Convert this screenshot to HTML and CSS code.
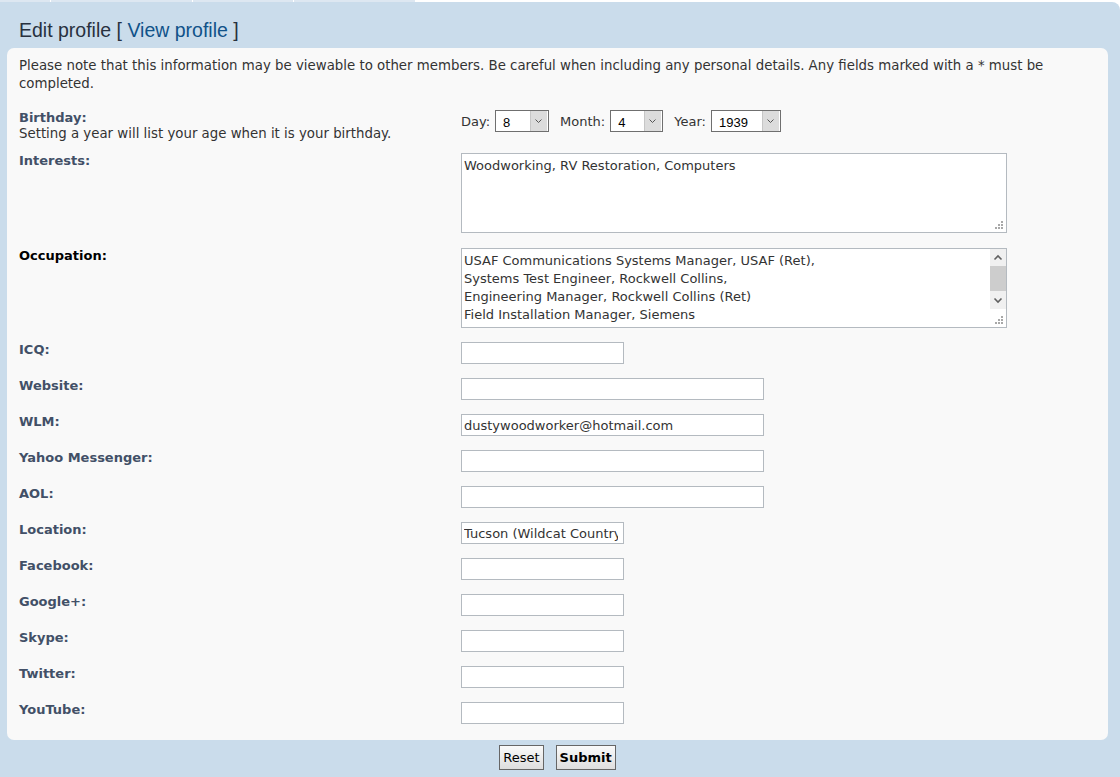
FILE: index.html
```html
<!DOCTYPE html>
<html lang="en">
<head>
    <meta charset="UTF-8">
    <meta name="viewport" content="width=device-width, initial-scale=1.0">
    <title>Edit profile</title>
    <link rel="stylesheet" href="styles.css">
</head>
<body>
    <div class="tabs"><span class="t1"></span><span class="t2"></span><span class="t3"></span><span class="t4"></span></div>
    <form class="wrap" action="#" onsubmit="return false;">
        <h2>Edit profile <span class="br">[</span> <a href="#">View profile</a> <span class="br">]</span></h2>
        <div class="panel">
            <p class="note">Please note that this information may be viewable to other members. Be careful when including any personal details. Any fields marked with a * must be completed.</p>

            <dl class="row row-bday">
                <dt><label>Birthday:</label><span class="explain">Setting a year will list your age when it is your birthday.</span></dt>
                <dd class="bday">
                    <label for="bday_day">Day:</label>
                    <select id="bday_day" class="sel-day"><option>8</option></select>
                    <label for="bday_month">Month:</label>
                    <select id="bday_month" class="sel-month"><option>4</option></select>
                    <label for="bday_year">Year:</label>
                    <select id="bday_year" class="sel-year"><option>1939</option></select>
                </dd>
            </dl>
            <dl class="row row-text">
                <dt><label for="interests">Interests:</label></dt>
                <dd><textarea id="interests">Woodworking, RV Restoration, Computers</textarea></dd>
            </dl>
            <dl class="row">
                <dt><label for="occupation" class="strong">Occupation:</label></dt>
                <dd>
                    <div class="scrollbox">
                        <textarea id="occupation">USAF Communications Systems Manager, USAF (Ret),
Systems Test Engineer, Rockwell Collins,
Engineering Manager, Rockwell Collins (Ret)
Field Installation Manager, Siemens</textarea>
                        <div class="vscroll">
                            <span class="sb-btn sb-up"></span>
                            <span class="sb-track"><span class="sb-thumb"></span></span>
                            <span class="sb-btn sb-down"></span>
                            <span class="sb-corner"></span>
                        </div>
                    </div>
                </dd>
            </dl>
            <dl class="row">
                <dt><label for="icq">ICQ:</label></dt>
                <dd><input type="text" id="icq" class="short"></dd>
            </dl>
            <dl class="row">
                <dt><label for="website">Website:</label></dt>
                <dd><input type="text" id="website" class="wide"></dd>
            </dl>
            <dl class="row">
                <dt><label for="wlm">WLM:</label></dt>
                <dd><input type="text" id="wlm" class="wide" value="dustywoodworker@hotmail.com"></dd>
            </dl>
            <dl class="row">
                <dt><label for="yim">Yahoo Messenger:</label></dt>
                <dd><input type="text" id="yim" class="wide"></dd>
            </dl>
            <dl class="row">
                <dt><label for="aol">AOL:</label></dt>
                <dd><input type="text" id="aol" class="wide"></dd>
            </dl>
            <dl class="row">
                <dt><label for="location">Location:</label></dt>
                <dd><input type="text" id="location" class="short" value="Tucson (Wildcat Country)"></dd>
            </dl>
            <dl class="row">
                <dt><label for="facebook">Facebook:</label></dt>
                <dd><input type="text" id="facebook" class="short"></dd>
            </dl>
            <dl class="row">
                <dt><label for="googleplus">Google+:</label></dt>
                <dd><input type="text" id="googleplus" class="short"></dd>
            </dl>
            <dl class="row">
                <dt><label for="skype">Skype:</label></dt>
                <dd><input type="text" id="skype" class="short"></dd>
            </dl>
            <dl class="row">
                <dt><label for="twitter">Twitter:</label></dt>
                <dd><input type="text" id="twitter" class="short"></dd>
            </dl>
            <dl class="row last">
                <dt><label for="youtube">YouTube:</label></dt>
                <dd><input type="text" id="youtube" class="short"></dd>
            </dl>
        </div>
        <div class="submit-buttons">
            <input type="reset" value="Reset" class="button2">
            <input type="submit" value="Submit" class="button1">
        </div>
    </form>
</body>
</html>
```

FILE: styles.css
```css
body {
    margin: 0;
    background: #fff;
    font-family: "DejaVu Sans", Verdana, sans-serif;
    color: #333;
}
.tabs {
    display: flex;
    height: 2px;
}
.tabs span {
    background: #dde7f1;
    margin-right: 1px;
}
.t1 { width: 50px; }
.t2 { width: 141px; }
.t3 { width: 100px; }
.t4 { width: 121px; }
.wrap {
    display: block;
    background: #cadceb;
    border-radius: 0 8px 0 0;
    padding: 0 12px 0 7px;
    height: 775px;
    box-sizing: border-box;
}
h2 {
    margin: 0 0 6px;
    padding: 16px 0 0 12px;
    font-family: "Liberation Sans", Arial, sans-serif;
    font-weight: normal;
    font-size: 19.5px;
    line-height: 24px;
    color: #28313f;
}
h2 a {
    color: #105289;
    text-decoration: none;
}
.panel {
    background: #f9f9f9;
    border-radius: 7px;
    padding: 9px 12px 16px;
}
.note {
    margin: 0 0 17px;
    font-size: 13.33px;
    line-height: 18px;
    color: #333;
}
.row {
    display: flex;
    margin: 0 0 14px;
}
.row.last {
    margin-bottom: 0;
}
.row-bday {
    margin-bottom: 11px;
}
.row-text {
    margin-bottom: 15px;
}
dt {
    width: 442px;
    flex: none;
    font-size: 13px;
    line-height: 16px;
}
dt label {
    display: block;
    font-weight: bold;
    color: #425067;
}
dt label.strong {
    color: #000;
}
.explain {
    display: block;
    font-size: 13.33px;
    color: #333;
}
dd {
    margin: 0;
}
.bday {
    display: flex;
    align-items: center;
    height: 22px;
    font-size: 13px;
    color: #333;
}
.bday label {
    margin-right: 5px;
}
.bday select {
    margin-right: 11px;
}
select {
    -webkit-appearance: none;
    appearance: none;
    height: 22px;
    box-sizing: border-box;
    border: 1px solid #6f6f6f;
    border-radius: 0;
    padding: 3px 0 0 7px;
    font-family: "Liberation Sans", Arial, sans-serif;
    font-size: 13px;
    color: #000;
    background: #fff url("data:image/svg+xml,%3Csvg xmlns='http://www.w3.org/2000/svg' width='18' height='20'%3E%3Crect x='0' y='0' width='17' height='20' fill='%23dcdcdc'/%3E%3Crect x='0' y='0' width='1' height='20' fill='%23c6c6c6'/%3E%3Cpath d='M5.5 8.5l3 3 3-3' fill='none' stroke='%23555' stroke-width='1'/%3E%3C/svg%3E") right top no-repeat;
}
.sel-day { width: 54px; }
.sel-month { width: 53px; }
.sel-year { width: 70px; }
textarea {
    display: block;
    width: 546px;
    height: 80px;
    box-sizing: border-box;
    border: 1px solid #b4bac0;
    background: #fff;
    padding: 3px 2px;
    margin: 0;
    font-family: "DejaVu Sans", Verdana, sans-serif;
    font-size: 13px;
    line-height: 18px;
    color: #333;
    overflow: hidden;
}
textarea::-webkit-resizer,
.sb-corner {
    background: #fff url("data:image/svg+xml,%3Csvg xmlns='http://www.w3.org/2000/svg' width='16' height='16'%3E%3Cg fill='%23a8a8a8'%3E%3Crect x='11' y='5' width='2' height='2'/%3E%3Crect x='8' y='8' width='2' height='2'/%3E%3Crect x='11' y='8' width='2' height='2'/%3E%3Crect x='5' y='11' width='2' height='2'/%3E%3Crect x='8' y='11' width='2' height='2'/%3E%3Crect x='11' y='11' width='2' height='2'/%3E%3C/g%3E%3C/svg%3E") right bottom no-repeat;
}
.scrollbox {
    display: flex;
    width: 546px;
    height: 80px;
    box-sizing: border-box;
    border: 1px solid #b4bac0;
    background: #fff;
}
.scrollbox textarea {
    flex: 1;
    width: auto;
    height: 100%;
    border: none;
    padding: 3px 2px 0 2px;
    resize: none;
}
.vscroll {
    display: flex;
    flex-direction: column;
    width: 16px;
    flex: none;
}
.sb-btn {
    height: 17px;
    background-color: #f0f0f0;
    background-position: center;
    background-repeat: no-repeat;
}
.sb-up {
    background-image: url("data:image/svg+xml,%3Csvg xmlns='http://www.w3.org/2000/svg' width='16' height='17'%3E%3Cpath d='M4.5 10.5l3.5-3.5 3.5 3.5' fill='none' stroke='%23606060' stroke-width='1.6'/%3E%3C/svg%3E");
}
.sb-down {
    background-image: url("data:image/svg+xml,%3Csvg xmlns='http://www.w3.org/2000/svg' width='16' height='17'%3E%3Cpath d='M4.5 6.5l3.5 3.5 3.5-3.5' fill='none' stroke='%23606060' stroke-width='1.6'/%3E%3C/svg%3E");
}
.sb-track {
    flex: 1;
    background: #f0f0f0;
}
.sb-thumb {
    display: block;
    height: 25px;
    background: #cdcdcd;
}
.sb-corner {
    height: 18px;
    flex: none;
}
input[type="text"] {
    display: block;
    height: 22px;
    box-sizing: border-box;
    border: 1px solid #b4bac0;
    background: #fff;
    padding: 1px 5px 0 2px;
    margin: 0;
    font-family: "DejaVu Sans", Verdana, sans-serif;
    font-size: 13px;
    color: #333;
}
.short { width: 163px; }
.wide { width: 303px; }
.submit-buttons {
    display: flex;
    justify-content: center;
    gap: 12px;
    padding: 5px 0 0;
}
.submit-buttons input {
    height: 25px;
    box-sizing: border-box;
    padding: 0 3px;
    border: 1px solid #666;
    border-radius: 0;
    background: linear-gradient(#fafafa, #dedede);
    font-family: "DejaVu Sans", Verdana, sans-serif;
    font-size: 13px;
    color: #000;
}
.button1 {
    font-weight: bold;
}
```
